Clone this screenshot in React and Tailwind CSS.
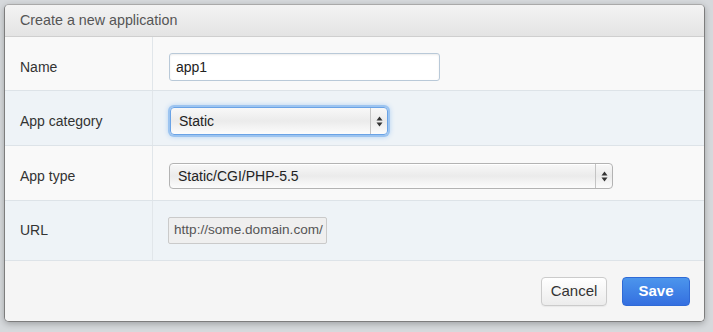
import React from 'react';

const font = { fontFamily: '"Liberation Sans", Arial, sans-serif' };

const Arrows = () => (
  <svg width="7" height="11" viewBox="0 0 7 11" className="text-[#333]">
    <path d="M3.5 0.5 L6.5 4.5 L0.5 4.5 Z" fill="currentColor" />
    <path d="M3.5 10.5 L6.5 6.5 L0.5 6.5 Z" fill="currentColor" />
  </svg>
);

const Select = ({ value, width, height, focused }) => (
  <div
    className={`flex items-stretch rounded-[4px] border bg-gradient-to-b from-[#f8f8f8] via-[#ebebeb] to-[#fcfcfc] text-[14px] text-[#222] ${
      focused ? 'border-[#6aa3e6] shadow-[0_0_0_2px_#9cc4f0,0_0_5px_2px_#b5d3f4]' : 'border-[#b3b3b3] shadow-[inset_0_1px_0_#fff]'
    } ${width} ${height}`}
  >
    <div className="flex flex-1 items-center pl-2">{value}</div>
    <div className="flex w-[17px] items-center justify-center border-l border-[#c4c4c4]">
      <Arrows />
    </div>
  </div>
);

const Row = ({ label, tint, pad, height, children }) => (
  <div className={`flex border-b border-[#dde3e8] ${tint ? 'bg-[#eef3f7]' : 'bg-[#f9f9f9]'} ${height}`}>
    <div className={`flex w-[148px] items-center border-r border-[#e1e6ea] pl-[15px] text-[14px] text-[#333] ${pad}`}>
      {label}
    </div>
    <div className={`flex flex-1 items-center pl-4 ${pad}`}>{children}</div>
  </div>
);

export default function App() {
  return (
    <div className="h-[332px] w-[713px] overflow-hidden bg-[#d6d9dc] pl-[4px] pt-[4px]" style={font}>
      <div className="flex h-[318px] w-[701px] flex-col overflow-hidden rounded-[5px] border border-[#7d7d7d] border-t-[#a9a9a9] shadow-[0_2px_6px_rgba(0,0,0,0.25)]">
        {/* Header */}
        <div className="flex h-[32px] items-center border-b border-[#cfcfcf] bg-gradient-to-b from-[#f3f3f3] to-[#e4e4e4] pl-[15px] text-[14.3px] text-[#555]">
          Create a new application
        </div>

        <Row label="Name" height="h-[54px]" pad="pt-[7px]">
          <div className="flex h-[28px] w-[271px] items-center rounded-[3px] border border-[#b9c9d8] bg-white pl-[6px] text-[14px] text-[#222] shadow-[inset_0_1px_2px_rgba(0,0,0,0.08)]">
            app1
          </div>
        </Row>

        <Row label="App category" tint height="h-[55px]" pad="pt-[6px]">
          <div className="pl-px">
            <Select value="Static" width="w-[218px]" height="h-[28px]" focused />
          </div>
        </Row>

        <Row label="App type" height="h-[55px]" pad="pt-[6px]">
          <Select value="Static/CGI/PHP-5.5" width="w-[444px]" height="h-[26px]" />
        </Row>

        <Row label="URL" tint height="h-[60px]" pad="pt-0">
          <div className="-ml-px flex h-[27px] w-[159px] items-center rounded-[2px] border border-[#cacaca] bg-[#efefef] pl-[5px] text-[13.6px] text-[#555] whitespace-nowrap">
            http://some.domain.com/
          </div>
        </Row>

        {/* Footer */}
        <div className="flex flex-1 items-center justify-end gap-[15px] bg-[#f5f5f5] pr-[14px]">
          <button className="flex h-[29px] w-[66px] items-center justify-center rounded-[4px] border border-[#cbcbcb] bg-gradient-to-b from-[#ffffff] to-[#ececec] text-[15px] text-[#333] shadow-[0_1px_1px_rgba(0,0,0,0.05)]">
            Cancel
          </button>
          <button className="flex h-[29px] w-[68px] items-center justify-center rounded-[4px] border border-[#2f6ad6] bg-gradient-to-b from-[#4c95ec] to-[#356fe0] text-[15px] font-bold text-white">
            Save
          </button>
        </div>
      </div>
    </div>
  );
}
